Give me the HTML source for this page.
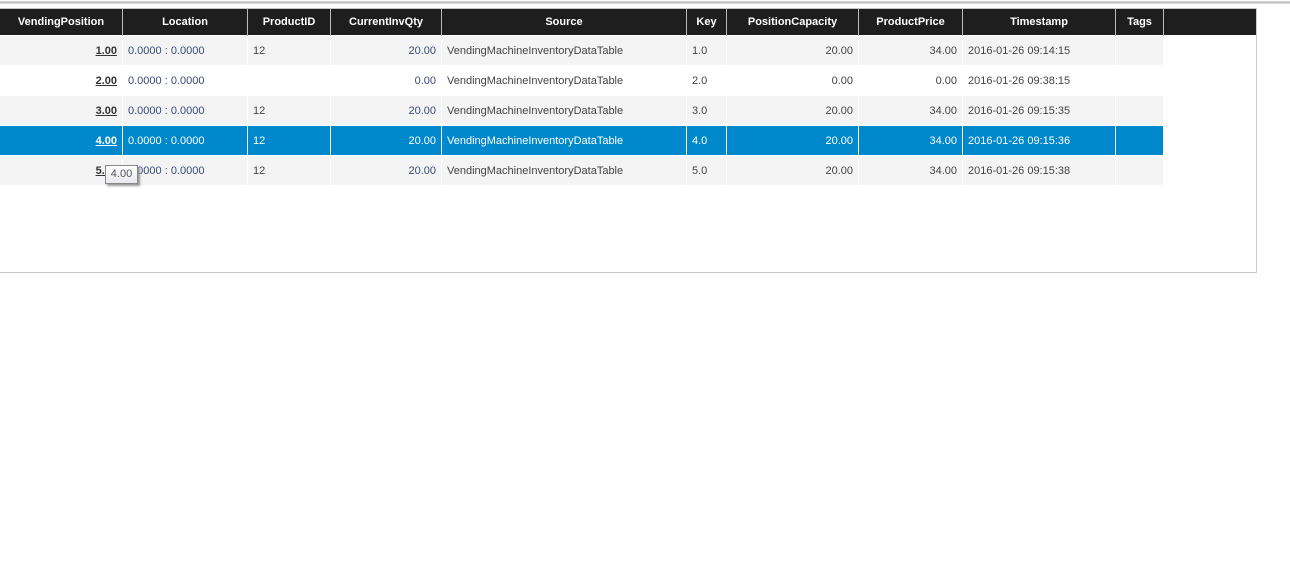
<!DOCTYPE html>
<html><head><style>
body{margin:0;width:1290px;height:562px;background:#fff;position:relative;overflow:hidden;font-family:"Liberation Sans",sans-serif;}
.topline{position:absolute;left:0;top:1px;width:1290px;height:3px;background:linear-gradient(#ddd,#bbb,#e8e8e8);}
.box{position:absolute;left:-1px;top:8px;width:1256px;height:263px;border:1px solid #c8c8c8;}
.hdr{position:absolute;left:0;top:9px;width:1256px;height:26px;background:#1e1e1e;}
table{position:absolute;left:0;top:9px;border-collapse:collapse;font-size:11px;}
th{height:26px;padding:0;color:#fff;font-weight:bold;background:#1e1e1e;border-right:1px solid #bbb;text-align:center;font-size:11px;}
td{height:29px;padding:0 5px;border-right:1px solid #fff;border-top:1px solid #fff;color:#444;white-space:nowrap;}
tr.o td{background:#f4f4f4}
tr.e td{background:#fff}
tr.s td{background:#0088cc;color:#fff}
.r{text-align:right}
a{color:#333;font-weight:bold;text-decoration:underline}
tr.s a{color:#fff}
.b{color:#3a4a78}
tr.s .b{color:#fff}
.tip{position:absolute;left:105px;top:165px;width:31px;height:17px;border:1px solid #888;background:linear-gradient(#fff,#e8e8f0);font-size:11px;color:#555;line-height:17px;text-align:center;box-shadow:2px 2px 2px #999;}
</style></head><body>
<div class="topline"></div>
<div class="box"></div>
<div class="hdr"></div>
<table>
<tr><th style="width:122px">VendingPosition</th><th style="width:124px">Location</th><th style="width:82px">ProductID</th><th style="width:110px">CurrentInvQty</th><th style="width:244px">Source</th><th style="width:39px">Key</th><th style="width:131px">PositionCapacity</th><th style="width:103px">ProductPrice</th><th style="width:152px">Timestamp</th><th style="width:47px">Tags</th></tr>
<tr class="o"><td class="r"><a>1.00</a></td><td class="b">0.0000 : 0.0000</td><td>12</td><td class="r b">20.00</td><td>VendingMachineInventoryDataTable</td><td>1.0</td><td class="r">20.00</td><td class="r">34.00</td><td>2016-01-26 09:14:15</td><td></td></tr>
<tr class="e"><td class="r"><a>2.00</a></td><td class="b">0.0000 : 0.0000</td><td></td><td class="r b">0.00</td><td>VendingMachineInventoryDataTable</td><td>2.0</td><td class="r">0.00</td><td class="r">0.00</td><td>2016-01-26 09:38:15</td><td></td></tr>
<tr class="o"><td class="r"><a>3.00</a></td><td class="b">0.0000 : 0.0000</td><td>12</td><td class="r b">20.00</td><td>VendingMachineInventoryDataTable</td><td>3.0</td><td class="r">20.00</td><td class="r">34.00</td><td>2016-01-26 09:15:35</td><td></td></tr>
<tr class="s"><td class="r"><a>4.00</a></td><td class="b">0.0000 : 0.0000</td><td>12</td><td class="r b">20.00</td><td>VendingMachineInventoryDataTable</td><td>4.0</td><td class="r">20.00</td><td class="r">34.00</td><td>2016-01-26 09:15:36</td><td></td></tr>
<tr class="o"><td class="r"><a>5.00</a></td><td class="b">0.0000 : 0.0000</td><td>12</td><td class="r b">20.00</td><td>VendingMachineInventoryDataTable</td><td>5.0</td><td class="r">20.00</td><td class="r">34.00</td><td>2016-01-26 09:15:38</td><td></td></tr>
</table>
<div class="tip">4.00</div>
</body></html>
